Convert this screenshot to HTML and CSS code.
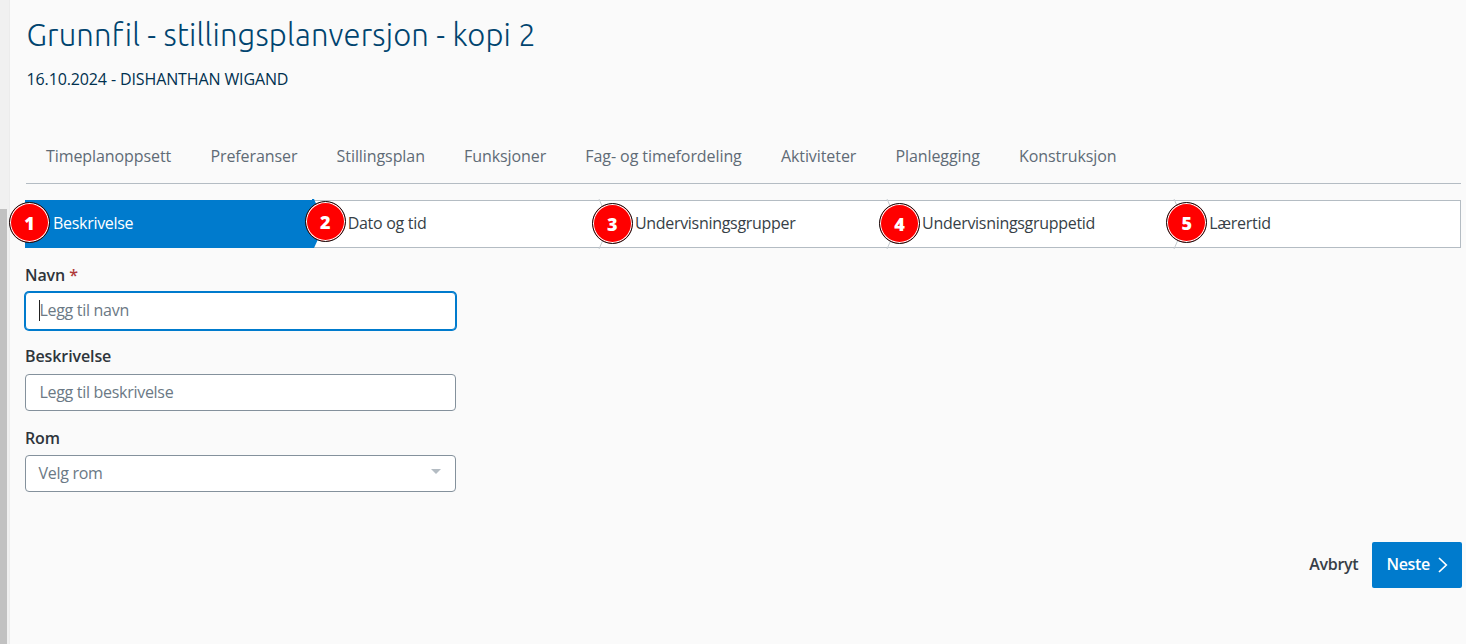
FILE: index.html
```
<!DOCTYPE html>
<html lang="no">

<head>
    <meta charset="UTF-8">
    <meta name="viewport" content="width=device-width, initial-scale=1.0">
    <title>Grunnfil - stillingsplanversjon - kopi 2</title>
    <link rel="stylesheet" href="styles.css">
</head>

<body>
    <div class="scroll-track">
        <div class="scroll-thumb"></div>
    </div>
    <main class="page">
        <h1>Grunnfil - stillingsplanversjon - kopi 2</h1>
        <p class="subtitle">16.10.2024 - DISHANTHAN WIGAND</p>

        <nav class="tabs">
            <a>Timeplanoppsett</a>
            <a>Preferanser</a>
            <a>Stillingsplan</a>
            <a>Funksjoner</a>
            <a>Fag- og timefordeling</a>
            <a>Aktiviteter</a>
            <a>Planlegging</a>
            <a>Konstruksjon</a>
        </nav>

        <ol class="steps">
            <li class="step active">
                <span class="badge">1</span>Beskrivelse
            </li>
            <li class="step">
                <svg class="arrow filled" width="14" height="50" viewBox="0 0 14 50"><path d="M0 0H2L13 25L2 49H0Z"/></svg>
                <span class="badge badge-up">2</span>Dato og tid
            </li>
            <li class="step">
                <svg class="arrow" width="14" height="50" viewBox="0 0 14 50"><path d="M1 0L12 25L1 50"/></svg>
                <span class="badge badge-down">3</span>Undervisningsgrupper
            </li>
            <li class="step">
                <svg class="arrow" width="14" height="50" viewBox="0 0 14 50"><path d="M1 0L12 25L1 50"/></svg>
                <span class="badge badge-down">4</span>Undervisningsgruppetid
            </li>
            <li class="step">
                <svg class="arrow" width="14" height="50" viewBox="0 0 14 50"><path d="M1 0L12 25L1 50"/></svg>
                <span class="badge">5</span>Lærertid
            </li>
        </ol>

        <form class="form">
            <div class="field">
                <label for="navn">Navn <span class="required">*</span></label>
                <div class="control focused">
                    <span class="caret"></span>
                    <input type="text" id="navn" placeholder="Legg til navn">
                </div>
            </div>
            <div class="field">
                <label for="beskrivelse">Beskrivelse</label>
                <div class="control">
                    <input type="text" id="beskrivelse" placeholder="Legg til beskrivelse">
                </div>
            </div>
            <div class="field">
                <label>Rom</label>
                <div class="control select">
                    <span>Velg rom</span>
                    <svg width="10" height="5" viewBox="0 0 10 5"><path d="M0 0H10L5 5Z" fill="#b4bcc3"/></svg>
                </div>
            </div>
        </form>

        <div class="actions">
            <button type="button" class="btn">Avbryt</button>
            <button type="button" class="btn primary">Neste
                <svg width="10" height="16" viewBox="0 0 10 16"><path d="M1 1L8.3 8L1 15" fill="none" stroke="#fff" stroke-width="1.7"/></svg>
            </button>
        </div>
    </main>
</body>

</html>
```
FILE: styles.css
```
* {
    box-sizing: border-box;
}

body {
    display: flex;
    height: 644px;
    margin: 0;
    overflow: hidden;
    background-color: #fafafa;
    color: #373f47;
    font-family: "Open Sans", sans-serif;
    font-size: 16px;
    line-height: 22px;
}

.scroll-track {
    width: 10px;
    padding-top: 209px;
    background-color: #f0f0f0;
    border-right: 1px solid #ebebeb;
}

.scroll-thumb {
    width: 7px;
    height: 435px;
    background-color: #c1c1c1;
}

.page {
    flex: 1;
    padding: 15px 4px 0 15px;
}

h1 {
    margin: 0 0 13px 1.5px;
    color: #00446f;
    font-family: Ubuntu, "Open Sans", sans-serif;
    font-size: 31px;
    font-weight: 300;
    line-height: 40px;
    letter-spacing: 0.17px;
    white-space: nowrap;
}

.subtitle {
    margin: 0 0 55px 1.5px;
    color: #00304f;
    letter-spacing: -0.12px;
}

.tabs {
    display: flex;
    gap: 39.2px;
    height: 39px;
    margin: 0 1px 16px 1px;
    padding-left: 20px;
    border-bottom: 1px solid #b4bcc3;
    color: #5f6b76;
    letter-spacing: -0.08px;
}

.steps {
    display: grid;
    grid-template-columns: repeat(5, 1fr);
    width: 1436px;
    height: 48px;
    margin: 0 0 16px;
    padding: 0;
    list-style: none;
    background-color: #fff;
    box-shadow: inset 0 0 0 1px #b4bcc3;
    letter-spacing: -0.3px;
}

.step {
    position: relative;
    padding: 12px 0 0 35.5px;
}

.step.active {
    padding-left: 28px;
    background-color: #007bcd;
    color: #fff;
}

.arrow {
    position: absolute;
    top: -1px;
    left: -1px;
    fill: none;
    stroke: #c5cbd0;
}

.arrow.filled {
    left: 0;
    fill: #007bcd;
    stroke: none;
}

.badge {
    position: absolute;
    top: 2px;
    left: -7.5px;
    width: 41px;
    height: 41px;
    border: 1.5px solid #111;
    border-radius: 50%;
    background-color: #f00;
    box-shadow: inset 0 0 0 1px #fff;
    color: #fff;
    font-size: 18px;
    font-weight: 800;
    line-height: 40px;
    letter-spacing: 0;
    text-align: center;
}

.active .badge {
    left: -16px;
}

.badge-up {
    top: 1px;
}

.badge-down {
    top: 3px;
}

.form {
    width: 431px;
    height: 278px;
}

.field {
    margin-bottom: 16px;
}

.field:first-child {
    margin-bottom: 15px;
}

.field label {
    display: block;
    height: 28px;
    color: #2e353b;
    font-weight: 600;
    letter-spacing: -0.1px;
}

.field:nth-child(2) label {
    height: 29px;
}

.required {
    color: #b03a3a;
}

.control {
    position: relative;
    display: flex;
    align-items: center;
    height: 37px;
    padding: 0 14px 2px 13.5px;
    border: 1px solid #84919c;
    border-radius: 4px;
    background-color: #fff;
    color: #6b7985;
    letter-spacing: -0.3px;
}

.control.focused {
    height: 38px;
    padding-bottom: 3px;
    border-color: #007bcd;
    box-shadow: 0 0 0 1px #007bcd;
}

.control input {
    width: 100%;
    padding: 0;
    border: none;
    outline: none;
    background: none;
    font: inherit;
    letter-spacing: inherit;
}

.control input::placeholder {
    color: #6b7985;
}

.control.select {
    justify-content: space-between;
    padding-left: 12.5px;
}

.select svg {
    margin-bottom: 3px;
}

.caret {
    position: absolute;
    top: 7px;
    left: 13px;
    width: 1px;
    height: 21px;
    background-color: #222;
}

.actions {
    display: flex;
    justify-content: flex-end;
}

.btn {
    display: flex;
    align-items: center;
    gap: 8px;
    height: 46px;
    padding: 0 14px 2px;
    border: none;
    border-radius: 2px;
    background: none;
    color: #373f47;
    font: inherit;
    font-weight: 600;
    letter-spacing: -0.3px;
}

.btn svg {
    margin-top: 2px;
}

.btn.primary {
    background-color: #007bcd;
    color: #fff;
}
```
